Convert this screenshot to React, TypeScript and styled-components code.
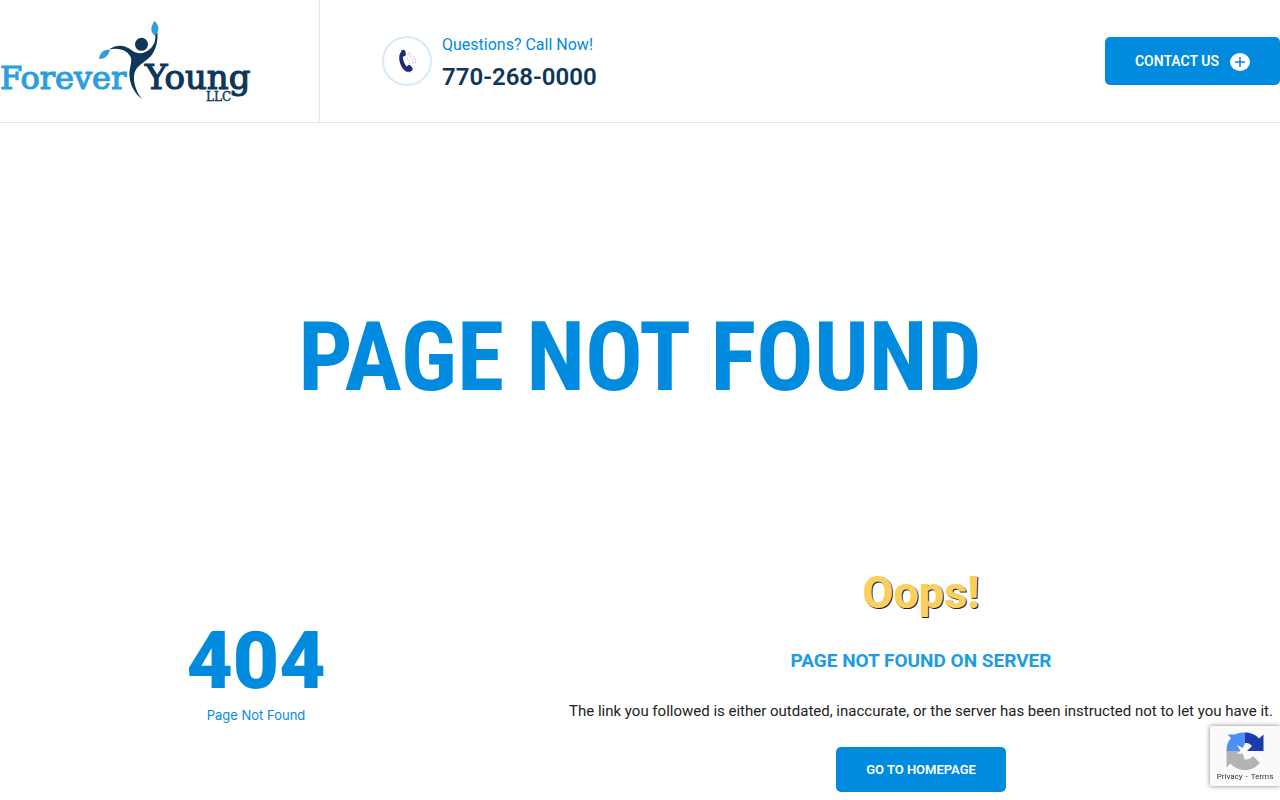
import React from "react";
import styled, { createGlobalStyle } from "styled-components";

const blue = "#008bdf";
const navy = "#0e3658";

const GlobalStyle = createGlobalStyle`
  *, *::before, *::after { box-sizing: border-box; }
  body {
    margin: 0;
    background: #fff;
    color: #222;
    font-family: Roboto, "Liberation Sans", sans-serif;
    font-size: 15px;
  }
  h1, h2, h3, p { margin: 0; }
  a { color: inherit; text-decoration: none; }
`;

const Header = styled.header`
  display: flex;
  align-items: stretch;
  border-bottom: 1px solid #e6e6e8;
`;

const LogoCell = styled.div`
  flex: 0 0 25%;
  border-right: 1px solid #e6e6e8;
  padding: 16px 0;
`;

const LogoLink = styled.a`
  display: block;
  width: 252px;
  height: 90px;
`;

const HeaderMain = styled.div`
  flex: 1;
  display: flex;
  align-items: center;
  justify-content: space-between;
  padding-left: 62px;
`;

const Phone = styled.a`
  display: flex;
  align-items: center;
  gap: 10px;
`;

const PhoneBadge = styled.span`
  display: grid;
  place-items: center;
  width: 50px;
  height: 50px;
  border: 2px solid #d6ebf9;
  border-radius: 50%;
`;

const PhoneText = styled.span`
  display: grid;
  padding-top: 2px;
`;

const PhoneLabel = styled.span`
  font-size: 16px;
  line-height: 30px;
  color: ${blue};
`;

const PhoneNumber = styled.span`
  font-size: 24px;
  line-height: 34px;
  font-weight: 600;
  color: ${navy};
`;

const Button = styled.button<{ $size: "large" | "small" }>`
  display: inline-flex;
  align-items: center;
  justify-content: center;
  gap: 11px;
  height: ${(p) => (p.$size === "large" ? 48 : 45)}px;
  padding: 0 30px;
  border: 0;
  border-radius: 5px;
  background: ${blue};
  color: #fff;
  font-family: inherit;
  font-size: ${(p) => (p.$size === "large" ? 14 : 13)}px;
  font-weight: 600;
  white-space: nowrap;
  cursor: pointer;
`;

const Hero = styled.section`
  display: grid;
  place-items: center;
  padding: 174px 20px 146px;
`;

const HeroTitle = styled.h1`
  font-family: "Roboto Condensed", Roboto, sans-serif;
  font-size: 96px;
  line-height: 120px;
  font-weight: 700;
  color: ${blue};
  text-align: center;
`;

const Columns = styled.section`
  display: grid;
  grid-template-columns: 2fr 3fr;
  align-items: center;
`;

const CodeColumn = styled.div`
  padding-bottom: 14px;
  text-align: center;
  color: ${blue};
`;

const Code = styled.h2`
  font-size: 80px;
  line-height: 88px;
  font-weight: 900;
`;

const CodeCaption = styled.p`
  font-family: Inter, sans-serif;
  font-size: 13px;
  line-height: 20px;
`;

const MessageColumn = styled.div`
  display: flex;
  flex-direction: column;
  align-items: center;
  padding-left: 50px;
  text-align: center;
`;

const Oops = styled.h2`
  font-size: 45px;
  line-height: 60px;
  font-weight: 800;
  color: #f9cf5f;
  text-shadow: 1px 1px 0 #222;
`;

const Subtitle = styled.h3`
  margin-top: 24px;
  font-size: 19px;
  line-height: 28px;
  font-weight: 700;
  color: #1b9ce5;
`;

const Message = styled.p`
  margin: 24px 0;
  font-size: 15px;
  line-height: 24px;
`;

const Captcha = styled.aside`
  position: fixed;
  right: 0;
  bottom: 14px;
  width: 70px;
  height: 60px;
  padding-top: 6px;
  display: flex;
  flex-direction: column;
  align-items: center;
  background: #fafafa;
  border-radius: 2px 0 0 2px;
  box-shadow: 0 0 5px #808080;
`;

const CaptchaLinks = styled.div`
  display: flex;
  gap: 3px;
  font-size: 8px;
  line-height: 14px;
  color: #333;
`;

const Logo = () => (
  <svg width="252" height="90" viewBox="0 16 252 90" role="img" aria-label="Forever Young LLC">
    <g fontFamily='"DejaVu Serif", serif' fontWeight="400" strokeWidth="1.2">
      <text x="0" y="89" fontSize="32" fill="#2b9fdc" stroke="#2b9fdc">Forever</text>
      <text x="145" y="89" fontSize="34" fill={navy} stroke={navy}>Young</text>
      <text x="206" y="101" fontSize="12" fill={navy} stroke={navy} strokeWidth=".4">LLC</text>
    </g>
    <g fill={navy}>
      <circle cx="141.500" cy="44.300" r="6.500" />
      <path d="M109 49.500C115 44.500 125 44 132 50.500C138 55 145 53.500 150 49C155 44 156 40 155 32L157.500 33C158 43 155 52 150 57C145 62 137 65 134.500 73C132 83 138 95 142.500 99.500C136 95 130 86 129.500 76C129 68 132 64 131 58C129 52 121 47 109 49.500Z" />
    </g>
    <g fill="#2b9fdc">
      <path d="M154.500 21C150 27 150.500 33 155 35.500C160 31 159 25 154.500 21Z" />
      <path d="M99 59C99.500 52 105 48.500 110 50C108 56 105 59 99 59Z" />
    </g>
  </svg>
);

const PhoneIcon = () => (
  <svg width="18" height="24" viewBox="0 0 18 24" aria-hidden="true">
    <path d="M3 3C-1 8 2 19 9 23L12 21C6 16 4 10 5 4Z" fill="#1b2c72" />
    <path d="M3 1.500L6 .8Q7 1 7.500 3L7.800 5Q8 6.500 7 7L4.500 8ZM8 18L10.500 16Q11.500 15.500 12.500 16.500L14.500 19Q15.300 20.500 14 21.500L11 23.500Z" fill="#1b2c72" />
    <path d="M8.500 8.500Q12 11 11.500 15M9.500 5.500Q16 9 14.500 15.500M10 3.500Q19 8 17 15" fill="none" stroke="#b8acd4" strokeWidth=".8" strokeDasharray="2 1" />
  </svg>
);

const PlusIcon = () => (
  <svg width="20" height="20" viewBox="0 0 20 20" aria-hidden="true">
    <ellipse cx="10" cy="11" rx="10" ry="9" fill="#fff" />
    <path d="M5 11H15M10 6V16" stroke={blue} strokeWidth="1.500" />
  </svg>
);

const CaptchaIcon = () => (
  <svg width="38" height="38" viewBox="0 0 38 38" aria-hidden="true">
    <path d="M19 .5V11L17 16L11 13L14.500 19H.5C.5 13 2 9 5 6L1.500 2.500H9C12 1 15 .5 19 .5Z" fill="#4a90f5" />
    <path d="M19 .5C25 .5 30 3 33 6.500L37.500 2.500V19H21L26 14C24 11.500 22 10.500 19 11Z" fill="#1d3aae" />
    <path d="M.5 19H14.500L10.500 22L17 21.500L18.500 27.500C22 28 25 26.500 27 24L34 31C30 35.500 25 38 19 38C13 38 8 35.500 4.500 31.500L.5 35.500Z" fill="#b3b3b3" />
  </svg>
);

export default function App() {
  return (
    <>
      <GlobalStyle />
      <Header>
        <LogoCell>
          <LogoLink href="#home"><Logo /></LogoLink>
        </LogoCell>
        <HeaderMain>
          <Phone href="tel:7702680000">
            <PhoneBadge><PhoneIcon /></PhoneBadge>
            <PhoneText>
              <PhoneLabel>Questions? Call Now!</PhoneLabel>
              <PhoneNumber>770-268-0000</PhoneNumber>
            </PhoneText>
          </Phone>
          <Button $size="large">CONTACT US <PlusIcon /></Button>
        </HeaderMain>
      </Header>
      <main>
        <Hero>
          <HeroTitle>PAGE NOT FOUND</HeroTitle>
        </Hero>
        <Columns>
          <CodeColumn>
            <Code>404</Code>
            <CodeCaption>Page Not Found</CodeCaption>
          </CodeColumn>
          <MessageColumn>
            <Oops>Oops!</Oops>
            <Subtitle>PAGE NOT FOUND ON SERVER</Subtitle>
            <Message>The link you followed is either outdated, inaccurate, or the server has been instructed not to let you have it.</Message>
            <Button $size="small">GO TO HOMEPAGE</Button>
          </MessageColumn>
        </Columns>
      </main>
      <Captcha>
        <CaptchaIcon />
        <CaptchaLinks>
          <a href="#privacy">Privacy</a>
          <span>-</span>
          <a href="#terms">Terms</a>
        </CaptchaLinks>
      </Captcha>
    </>
  );
}
